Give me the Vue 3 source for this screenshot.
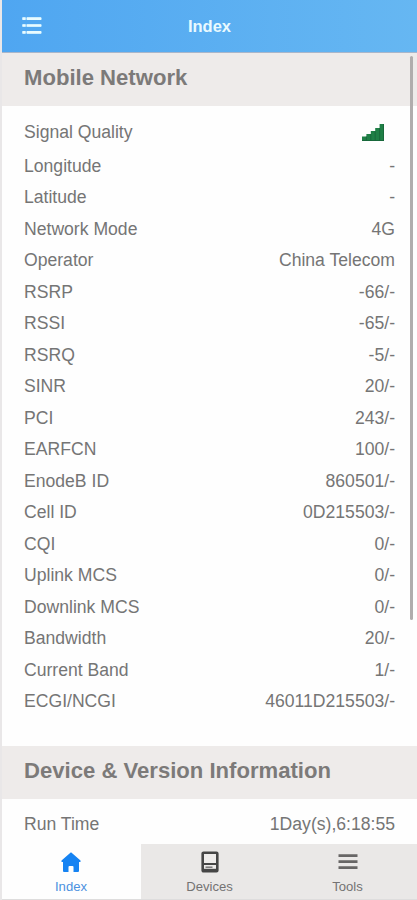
<template>
	<div class="app">
		<header class="navbar">
			<button class="navbar-menu" aria-label="Menu">
				<svg viewBox="0 0 20 20" width="20" height="20">
					<path d="M1 2.6h18M1 9.5h18M1 16.4h18" stroke="#9fd5fb" stroke-width="2.4" stroke-linecap="round" />
					<path d="M.5 2.6h3M5 2.6h14M.5 9.5h3M5 9.5h14M.5 16.4h3M5 16.4h14" stroke="#e8fbff" stroke-width="2.6" />
				</svg>
			</button>
			<h1 class="navbar-title">Index</h1>
		</header>

		<main class="content">
			<section v-for="section in sections" :key="section.title" class="section">
				<h2 class="section-title">{{ section.title }}</h2>
				<dl class="list">
					<div v-for="row in section.rows" :key="row.label" class="row" :class="{ 'row-signal': row.signal }">
						<dt>{{ row.label }}</dt>
						<dd v-if="row.signal" class="signal">
							<svg viewBox="0 0 22 17" width="22" height="17">
								<path d="M0 17v-4.5h4.4V10h4.4V7h4.4V4h4.4V0H22v17z" fill="#1f7f46" />
								<path d="M4.4 12.5V17M8.8 10v7M13.2 7.2V17M17.6 4v13M21.5 0v17M0 16.5h22" stroke="#176338" stroke-width=".8" fill="none" />
							</svg>
						</dd>
						<dd v-else>{{ row.value }}</dd>
					</div>
				</dl>
			</section>
			<span class="scrollbar"></span>
		</main>

		<nav class="tabbar">
			<a v-for="tab in tabs" :key="tab" class="tab" :class="{ active: tab === activeTab }" @click="activeTab = tab">
				<svg v-if="tab === 'Index'" class="tab-icon" viewBox="0 0 22 22" width="22" height="22">
					<path d="M11 1.2 20.5 9.5V11H19v9q0 1-1 1h-4.5v-5q0-1-1-1h-3q-1 0-1 1v5H4q-1 0-1-1v-9H1.5V9.5z" fill="#1683f2" />
				</svg>
				<svg v-else-if="tab === 'Devices'" class="tab-icon" viewBox="0 0 22 22" width="22" height="22">
					<rect x="3.7" y="1.7" width="14.6" height="18.6" rx=".8" fill="#eeeceb" stroke="#464646" stroke-width="2.6" />
					<path d="M4 13h14" stroke="#464646" stroke-width="2" />
					<path d="M6.5 16.2h7" stroke="#777" stroke-width="1.5" />
					<path d="M4 19.2h14" stroke="#464646" stroke-width="2.8" />
				</svg>
				<svg v-else class="tab-icon" viewBox="0 0 22 22" width="22" height="22">
					<path d="M1.5 4.6h19M1.5 10.7h19M1.5 16.7h19" stroke="#686666" stroke-width="2.8" />
				</svg>
				<span>{{ tab }}</span>
			</a>
		</nav>
	</div>
</template>

<script setup>
import { ref } from 'vue'

const activeTab = ref('Index')
const tabs = ['Index', 'Devices', 'Tools']

const sections = [
	{
		title: 'Mobile Network',
		rows: [
			{ label: 'Signal Quality', signal: true },
			{ label: 'Longitude', value: '-' },
			{ label: 'Latitude', value: '-' },
			{ label: 'Network Mode', value: '4G' },
			{ label: 'Operator', value: 'China Telecom' },
			{ label: 'RSRP', value: '-66/-' },
			{ label: 'RSSI', value: '-65/-' },
			{ label: 'RSRQ', value: '-5/-' },
			{ label: 'SINR', value: '20/-' },
			{ label: 'PCI', value: '243/-' },
			{ label: 'EARFCN', value: '100/-' },
			{ label: 'EnodeB ID', value: '860501/-' },
			{ label: 'Cell ID', value: '0D215503/-' },
			{ label: 'CQI', value: '0/-' },
			{ label: 'Uplink MCS', value: '0/-' },
			{ label: 'Downlink MCS', value: '0/-' },
			{ label: 'Bandwidth', value: '20/-' },
			{ label: 'Current Band', value: '1/-' },
			{ label: 'ECGI/NCGI', value: '46011D215503/-' },
		],
	},
	{
		title: 'Device & Version Information',
		rows: [{ label: 'Run Time', value: '1Day(s),6:18:55' }],
	},
]
</script>

<style>
body {
	margin: 0;
	overflow: hidden;
}
</style>

<style scoped>
.app {
	display: flex;
	flex-direction: column;
	box-sizing: border-box;
	height: 900px;
	border-left: 2px solid #e9e7e8;
	background: #fefefe;
	color: #757575;
	font-family: "Liberation Sans", Arial, sans-serif;
	font-size: 17.6px;
}

.navbar {
	display: grid;
	grid-template-columns: 60px 1fr 60px;
	align-items: center;
	flex: none;
	box-sizing: border-box;
	height: 53px;
	border-bottom: 1px solid #a9b6ca;
	background: linear-gradient(90deg, #4fa6f1, #66b7f2);
}

.navbar-menu {
	display: flex;
	padding: 0 0 0 20px;
	border: none;
	background: transparent;
}

.navbar-title {
	margin: 0;
	color: #e9faff;
	font-size: 16.5px;
	line-height: 20px;
	text-align: center;
}

.content {
	position: relative;
	flex: 1;
	min-height: 0;
	overflow: hidden;
}

.section-title {
	margin: 0;
	padding-left: 22px;
	background: #eeebea;
	color: #7c7a79;
	font-size: 22.1px;
	line-height: 50px;
	height: 53px;
}

.list {
	margin: 0;
	padding: 10.5px 22px 28px;
}

.row {
	display: flex;
	align-items: center;
	justify-content: space-between;
	height: 31.5px;
}

.row-signal {
	height: 32.5px;
	padding-bottom: 1.7px;
}

.row dd {
	margin: 0;
}

.signal {
	display: flex;
	padding-right: 11px;
}

.scrollbar {
	position: absolute;
	top: 3px;
	right: 4px;
	width: 3px;
	height: 564px;
	border-radius: 2px;
	background: #b0adad;
}

.tabbar {
	display: grid;
	grid-template-columns: 139px 138px 1fr;
	flex: none;
	height: 56px;
	background: #eae8e7;
	border-bottom: 1px solid #dedddd;
	box-sizing: border-box;
}

.tab {
	display: flex;
	flex-direction: column;
	align-items: center;
	padding: 7px 1px 0 0;
	color: #747373;
	font-size: 13.1px;
	line-height: 16px;
	cursor: pointer;
}

.tab-icon {
	margin-bottom: 6px;
}

.tab.active {
	background: #fefefe;
	color: #4b91df;
}
</style>
